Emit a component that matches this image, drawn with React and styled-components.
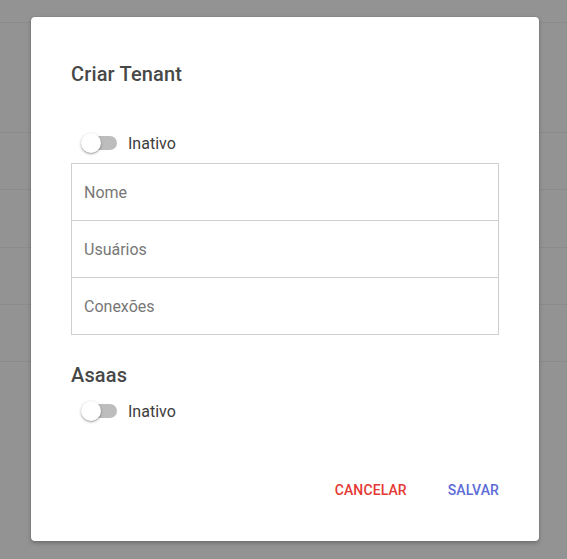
import React from 'react'
import styled, { createGlobalStyle } from 'styled-components'

const GlobalStyle = createGlobalStyle`
  html, body {
    margin: 0;
    padding: 0;
    background: #939393;
    font-family: Roboto, "Liberation Sans", Arial, sans-serif;
    -webkit-font-smoothing: antialiased;
  }
`

const Page = styled.div`
  position: relative;
  width: 567px;
  height: 559px;
  overflow: hidden;
  background: #939393;
`

const BackRow = styled.div`
  height: ${props => props.h}px;
  border-bottom: 1px solid #8b8b8b;
`

const Dialog = styled.div`
  position: absolute;
  left: 31px;
  top: 17px;
  width: 508px;
  height: 524px;
  box-sizing: border-box;
  padding: 41px 40px 0;
  background: #fff;
  border-radius: 4px;
  box-shadow: 0 2px 4px rgba(0, 0, 0, 0.25), 0 0 1px rgba(0, 0, 0, 0.3);
  display: flex;
  flex-direction: column;
`

const Heading = styled.h2`
  margin: ${props => props.top || 0}px 0 0;
  font-size: 20px;
  line-height: 32px;
  font-weight: 500;
  letter-spacing: 0.15px;
  color: #484848;
`

const ToggleRow = styled.label`
  display: flex;
  align-items: center;
  height: 40px;
  margin-top: ${props => props.top || 0}px;
  padding-left: 10px;
  cursor: pointer;
`

const Toggle = styled.span`
  position: relative;
  width: 36px;
  height: 20px;
  display: inline-block;

  &::before {
    content: '';
    position: absolute;
    left: 5px;
    right: 0;
    top: 3px;
    height: 14px;
    border-radius: 7px;
    background: #bdbdbd;
  }

  &::after {
    content: '';
    position: absolute;
    left: 0;
    top: 0;
    width: 20px;
    height: 20px;
    border-radius: 50%;
    background: #fff;
    box-shadow: 0 1px 3px rgba(0, 0, 0, 0.3), 0 1px 1px rgba(0, 0, 0, 0.14);
  }
`

const ToggleLabel = styled.span`
  margin-left: 11px;
  font-size: 16px;
  color: #3c3c3c;
`

const Fields = styled.div`
  display: flex;
  flex-direction: column;
  border: 1px solid #cfcfcf;
  border-bottom: none;
`

const Field = styled.input`
  height: 56px;
  box-sizing: content-box;
  border: none;
  border-bottom: 1px solid #cfcfcf;
  padding: 0 12px;
  font-family: inherit;
  font-size: 16px;
  color: #333;
  outline: none;

  &::placeholder {
    color: #777;
  }
`

const Actions = styled.div`
  display: flex;
  justify-content: flex-end;
  gap: 9px;
  margin-top: 41px;
  margin-right: -16px;
`

const FlatButton = styled.button`
  height: 36px;
  padding: 0 16px;
  border: none;
  background: transparent;
  font-family: inherit;
  font-size: 14px;
  font-weight: 500;
  letter-spacing: 0.1px;
  text-transform: uppercase;
  color: ${props => props.color};
  cursor: pointer;
`

function Switch({ label, top }) {
  return (
    <ToggleRow top={top}>
      <Toggle />
      <ToggleLabel>{label}</ToggleLabel>
    </ToggleRow>
  )
}

export default function App() {
  return (
    <Page>
      <GlobalStyle />
      <BackRow h={22} />
      <BackRow h={109} />
      <BackRow h={56} />
      <BackRow h={57} />
      <BackRow h={56} />
      <BackRow h={56} />
      <Dialog>
        <Heading>Criar Tenant</Heading>
        <Switch label="Inativo" top={33} />
        <Fields>
          <Field placeholder="Nome" />
          <Field placeholder="Usuários" />
          <Field placeholder="Conexões" />
        </Fields>
        <Heading top={24}>Asaas</Heading>
        <Switch label="Inativo" />
        <Actions>
          <FlatButton color="#e53935">Cancelar</FlatButton>
          <FlatButton color="#5c6bd6">Salvar</FlatButton>
        </Actions>
      </Dialog>
    </Page>
  )
}
